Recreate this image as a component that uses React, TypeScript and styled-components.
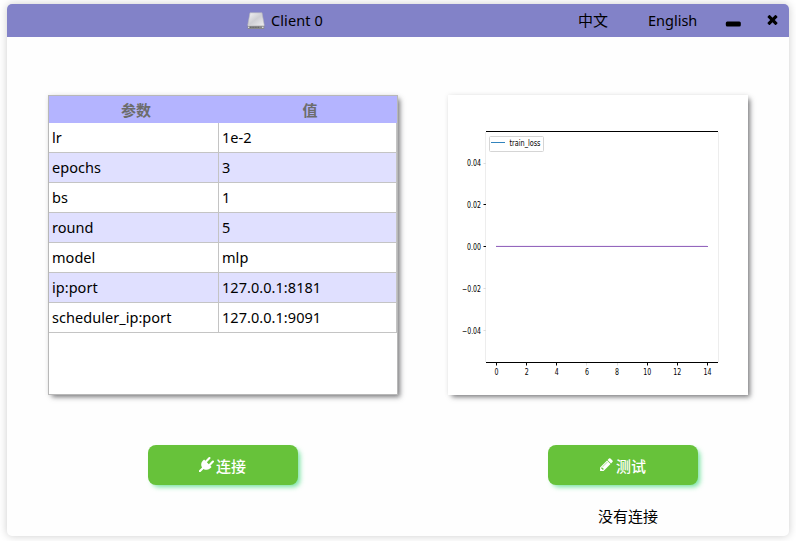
import React from "react";
import styled, { createGlobalStyle } from "styled-components";

const GlobalStyle = createGlobalStyle`
  html, body { margin: 0; padding: 0; background: #fff; }
  * { box-sizing: border-box; }
  body { overflow: hidden; }
`;

const Desktop = styled.div`
  width: 796px;
  height: 541px;
  padding: 4px 7px 5px;
  overflow: hidden;
  background: #fff;
  color: #000;
  font-family: "Noto Sans", "Noto Sans CJK SC", sans-serif;
  font-size: 14.5px;
`;

const Window = styled.main`
  display: flex;
  flex-direction: column;
  width: 782px;
  height: 532px;
  border-radius: 5px;
  background: #fefefe;
  box-shadow: 0 0 9px rgba(0, 0, 0, 0.2);
`;

const TitleBar = styled.header`
  display: grid;
  grid-template-columns: 240px 331px 70px 76px 41px 24px;
  align-items: center;
  height: 33px;
  flex: none;
  border-radius: 5px 5px 0 0;
  background: #8282c8;
`;

const Title = styled.div`
  grid-column: 2;
  display: flex;
  align-items: center;
  gap: 6px;
  line-height: 33px;
`;

const Text = styled.span<{ $spacing?: number; $size?: number }>`
  letter-spacing: ${(p) => p.$spacing ?? 0}px;
  font-size: ${(p) => p.$size ?? 14.5}px;
  white-space: nowrap;
`;

const BarButton = styled.button`
  display: flex;
  align-items: center;
  height: 33px;
  padding: 0 0 2px;
  border: 0;
  background: none;
  color: #000;
  font: inherit;
  text-align: left;
`;

const Content = styled.div`
  display: grid;
  grid-template-columns: 350px 300px;
  grid-template-rows: 300px 40px 20px;
  column-gap: 50px;
  padding: 58px 0 0 41px;
`;

const Panel = styled.section`
  height: 300px;
  background: #fff;
  box-shadow: 3px 3px 5px -1px rgba(60, 60, 65, 0.66), 0 0 5px rgba(0, 0, 0, 0.08);
`;

const TablePanel = styled(Panel)`
  border: 1px solid #b8b8b8;
`;

const TableRow = styled.div<{ $shaded?: boolean }>`
  display: grid;
  grid-template-columns: 170px 178px;
  height: 30px;
  background: ${(p) => (p.$shaded ? "#e0e0ff" : "#fff")};
`;

const HeaderRow = styled(TableRow)`
  grid-template-columns: 174px 174px;
  height: 27px;
  background: #b4b4ff;
  color: #6c6c6c;
  font-weight: 700;
  font-size: 15px;
`;

const HeaderCell = styled.div`
  text-align: center;
  line-height: 27px;
  font-family: "Noto Sans CJK SC", sans-serif;
`;

const Cell = styled.div`
  padding-left: 3px;
  border-right: 1px solid #c4c4c4;
  border-bottom: 1px solid #c4c4c4;
  line-height: 29px;
`;

const Actions = styled.div`
  width: 150px;
  margin: 50px 0 0 100px;
`;

const ActionButton = styled.button`
  display: flex;
  align-items: center;
  justify-content: center;
  gap: 2px;
  width: 150px;
  height: 40px;
  padding: 2px 1px 0 0;
  border: 0;
  border-radius: 8px;
  background: #67c23a;
  box-shadow: 3px 3px 5px -1px rgba(30, 210, 100, 0.62);
  color: #fff;
  font: 500 15px "Noto Sans CJK SC", sans-serif;
  line-height: 38px;
`;

const Glyph = styled.svg`
  display: block;
  flex: none;
`;

const RaisedGlyph = styled(Glyph)`
  margin-bottom: 3px;
`;

const Status = styled.div`
  width: 160px;
  margin-top: 20px;
  text-align: center;
  font: 15px/22px "Noto Sans CJK SC", sans-serif;
`;

const ChartLabel = styled.text`
  font: 8.2px "DejaVu Sans", sans-serif;
  fill: #000;
`;

const PARAMS = [
  { name: "lr", value: "1e-2" },
  { name: "epochs", value: "3" },
  { name: "bs", value: "1" },
  { name: "round", value: "5" },
  { name: "model", value: "mlp" },
  { name: "ip:port", value: "127.0.0.1:8181" },
  { name: "scheduler_ip:port", value: "127.0.0.1:9091" },
];

const Y_TICKS = [
  { y: 68, label: "0.04", x: 19, w: 14, faint: true },
  { y: 109.5, label: "0.02", x: 19, w: 14 },
  { y: 151.5, label: "0.00", x: 19, w: 14 },
  { y: 193.5, label: "−0.02", x: 14, w: 19, faint: true },
  { y: 235.5, label: "−0.04", x: 14, w: 19, faint: true },
];

const X_TICKS = [0, 2, 4, 6, 8, 10, 12, 14];

function DriveIcon() {
  return (
    <Glyph width="18" height="18" viewBox="0 0 18 18">
      <defs>
        <linearGradient id="drive-top" x1="0" y1="0" x2="1" y2="1">
          <stop offset="0" stopColor="#f4f4f6" />
          <stop offset="0.5" stopColor="#cfcfd4" />
          <stop offset="1" stopColor="#ededf0" />
        </linearGradient>
      </defs>
      <path d="M3 .8H15L17.3 13.5H.7Z" fill="url(#drive-top)" stroke="#b5b5bb" strokeWidth=".6" />
      <path d="M.7 13.4H17.3V16.2Q17.3 17 16.5 17H1.5Q.7 17 .7 16.2Z" fill="#88888a" />
      <path d="M1 13.6H17" stroke="#dedee0" strokeWidth=".8" />
      <path d="M3 15.3H12" stroke="#626262" strokeWidth="1" strokeDasharray="1 .6" />
      <path d="M1 15.3H2.2M15 15.3H16.5" stroke="#eee" />
    </Glyph>
  );
}

function LossChart() {
  return (
    <Glyph width="300" height="300" viewBox="0 0 300 300">
      <path d="M37.5 37V267M270.5 37V267" stroke="#ededed" fill="none" />
      <path d="M38 36.5H270M38 267.5H270" stroke="#000" fill="none" />
      {Y_TICKS.map((t) => (
        <g key={t.label}>
          <path d={`M35.5 ${Math.floor(t.y) + 0.5}H38`} stroke={t.faint ? "#ddd" : "#000"} />
          <ChartLabel x={t.x} y={t.y + 3} textLength={t.w} lengthAdjust="spacingAndGlyphs">
            {t.label}
          </ChartLabel>
        </g>
      ))}
      {X_TICKS.map((v) => {
        const x = 48.5 + v * 15.07;
        const w = v > 9 ? 8 : 4;
        return (
          <g key={v}>
            <path
              d={`M${Math.floor(x) + 0.5} 268V270.5`}
              stroke={v === 6 || v === 8 ? "#ddd" : "#000"}
            />
            <ChartLabel x={x - w / 2} y="279.8" textLength={w} lengthAdjust="spacingAndGlyphs">
              {v}
            </ChartLabel>
          </g>
        );
      })}
      <path d="M48 150.5H259" stroke="#f5eefa" />
      <path d="M48 151.5H260" stroke="#9467bd" />
      <rect x="41.5" y="41.5" width="54" height="15" rx="1" fill="#fff" stroke="#d5d5d5" />
      <path d="M43 47.5H57" stroke="#3284bd" />
      <ChartLabel x="61.5" y="50.5" textLength="31" lengthAdjust="spacingAndGlyphs">
        train_loss
      </ChartLabel>
    </Glyph>
  );
}

export default function App() {
  return (
    <Desktop>
      <GlobalStyle />
      <Window>
        <TitleBar>
          <Title>
            <DriveIcon />
            <Text $spacing={0.1}>Client 0</Text>
          </Title>
          <BarButton>
            <Text $size={15}>中文</Text>
          </BarButton>
          <BarButton>
            <Text>English</Text>
          </BarButton>
          <BarButton aria-label="Minimize">
            <Glyph width="18" height="31" viewBox="0 0 18 31">
              <rect x="1.8" y="17.5" width="15" height="5" rx="1.5" />
            </Glyph>
          </BarButton>
          <BarButton aria-label="Close">
            <Glyph width="15" height="15" viewBox="0 0 1792 1792">
              <path d="M1490 1322q0 40-28 68l-136 136q-28 28-68 28t-68-28l-294-294-294 294q-28 28-68 28t-68-28l-136-136q-28-28-28-68t28-68l294-294-294-294q-28-28-28-68t28-68l136-136q28-28 68-28t68 28l294 294 294-294q28-28 68-28t68 28l136 136q28 28 28 68t-28 68l-294 294 294 294q28 28 28 68z" />
            </Glyph>
          </BarButton>
        </TitleBar>
        <Content>
          <TablePanel>
            <HeaderRow>
              <HeaderCell>参数</HeaderCell>
              <HeaderCell>值</HeaderCell>
            </HeaderRow>
            {PARAMS.map((p, i) => (
              <TableRow key={p.name} $shaded={i % 2 === 1}>
                <Cell>
                  <Text $spacing={0.04}>{p.name}</Text>
                </Cell>
                <Cell>
                  <Text $spacing={0.05}>{p.value}</Text>
                </Cell>
              </TableRow>
            ))}
          </TablePanel>
          <Panel>
            <LossChart />
          </Panel>
          <Actions>
            <ActionButton>
              <RaisedGlyph width="15" height="15" viewBox="0 0 1792 1792" fill="currentColor">
                <path d="M1755 453q37 38 37 90.5t-37 90.5l-401 400 150 150-160 160q-163 163-389.5 186.5t-411.5-100.5l-362 362h-181v-181l362-362q-124-185-100.5-411.5t186.5-389.5l160-160 150 150 400-401q38-37 91-37t90 37 37 90.5-37 90.5l-400 401 234 234 401-400q38-37 91-37t90 37z" />
              </RaisedGlyph>
              连接
            </ActionButton>
          </Actions>
          <Actions>
            <ActionButton>
              <RaisedGlyph width="15" height="15" viewBox="0 0 1792 1792" fill="currentColor">
                <path d="M491 1536l91-91-235-235-91 91v107h128v128h107zm523-928q0-22-22-22-10 0-17 7l-542 542q-7 7-7 17 0 22 22 22 10 0 17-7l542-542q7-7 7-17zm-54-192l416 416-832 832h-416v-416zm683 96q0 53-37 90l-166 166-416-416 166-165q36-38 90-38 53 0 91 38l235 234q37 39 37 91z" />
              </RaisedGlyph>
              测试
            </ActionButton>
            <Status>没有连接</Status>
          </Actions>
        </Content>
      </Window>
    </Desktop>
  );
}
